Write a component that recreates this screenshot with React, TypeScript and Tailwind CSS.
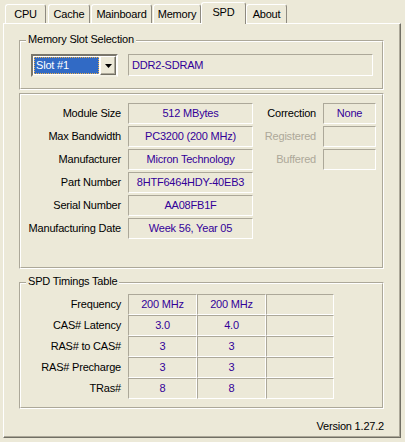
import React from "react";

const F = "font-['Liberation_Sans',Arial,sans-serif] text-[11px] tracking-[-0.2px] leading-[13px]";

function Group({ title, className, children }: { title?: string; className?: string; children?: React.ReactNode }) {
  return (
    <div className={`relative border border-t-[#ACA899] border-l-[#ACA899] border-r-white border-b-white ${className ?? ""}`}>
      <div className="h-full border border-t-white border-l-white border-r-[#ACA899] border-b-[#ACA899]">{children}</div>
      {title && (
        <div className="absolute left-[6px] top-[-8px] px-[2px] bg-[#ECE9D8] text-black">{title}</div>
      )}
    </div>
  );
}

function Box({ children, className }: { children?: React.ReactNode; className?: string }) {
  return (
    <div
      className={`h-[21px] border border-t-[#ACA899] border-l-[#ACA899] border-r-white border-b-white flex items-center justify-center text-[#330099] ${className ?? ""}`}
    >
      {children}
    </div>
  );
}

function Tab({ label, w, ml, selected }: { label: string; w: string; ml: string; selected?: boolean }) {
  return (
    <div
      className={`${w} ${ml} flex items-center justify-center rounded-t-[3px] border-t border-l border-r border-t-white border-l-white border-r-[#8E8A80] bg-[#ECE9D8] ${
        selected ? "h-[22px] -mb-px relative z-10 pb-[2px]" : "h-[19px]"
      }`}
    >
      {label}
    </div>
  );
}

const modRows: [string, string, string?, string?, boolean?][] = [
  ["Module Size", "512 MBytes", "Correction", "None", false],
  ["Max Bandwidth", "PC3200 (200 MHz)", "Registered", "", true],
  ["Manufacturer", "Micron Technology", "Buffered", "", true],
  ["Part Number", "8HTF6464HDY-40EB3"],
  ["Serial Number", "AA08FB1F"],
  ["Manufacturing Date", "Week 56, Year 05"],
];

const timings: [string, string, string][] = [
  ["Frequency", "200 MHz", "200 MHz"],
  ["CAS# Latency", "3.0", "4.0"],
  ["RAS# to CAS#", "3", "3"],
  ["RAS# Precharge", "3", "3"],
  ["TRas#", "8", "8"],
];

const cell =
  "h-[21px] border border-t-[#ACA899] border-l-[#ACA899] border-r-white border-b-white flex items-center justify-center text-[#330099]";

export default function App() {
  return (
    <div className={`w-[405px] h-[442px] bg-[#ECE9D8] text-black pt-[2px] pl-[3px] flex flex-col ${F}`}>
      {/* tabs */}
      <div className="h-[21px] flex items-end pl-[2px]">
        <Tab label="CPU" w="w-[41px]" ml="ml-0" />
        <Tab label="Cache" w="w-[42px]" ml="ml-[2px]" />
        <Tab label="Mainboard" w="w-[61px]" ml="ml-[1px]" />
        <Tab label="Memory" w="w-[48px]" ml="ml-[1px]" />
        <Tab label="SPD" w="w-[45px]" ml="ml-0" selected />
        <Tab label="About" w="w-[41px]" ml="ml-0" />
      </div>

      {/* page */}
      <div className="w-[398px] h-[415px] border border-t-white border-l-white border-r-[#716F64] border-b-[#716F64] shadow-[inset_-1px_-1px_0_#ACA899] flex flex-col pl-[15px]">
        {/* Memory Slot Selection */}
        <Group title="Memory Slot Selection" className="mt-[16px] w-[365px] h-[50px]">
          <div className="flex items-start pt-[12px] pl-[10px]">
            <div className="w-[87px] h-[23px] border-2 border-t-[#7A776C] border-l-[#7A776C] border-r-white border-b-[#F1EFE2] bg-white flex p-[1px]">
              <div className="flex-1 bg-[#316AC5] border border-dotted border-[#E8B050] text-white flex items-center pl-[1px]">
                Slot #1
              </div>
              <div className="w-[16px] ml-[1px] -my-[1px] -mr-[1px] bg-[#ECE9D8] border border-t-white border-l-white border-r-[#716F64] border-b-[#716F64] shadow-[inset_-1px_-1px_0_#ACA899] flex items-center justify-center">
                <svg width="7" height="4" viewBox="0 0 7 4">
                  <path d="M0 0H7L3.5 4Z" fill="#000" />
                </svg>
              </div>
            </div>
            <div className="ml-[10px] w-[245px] h-[22px] border border-t-[#ACA899] border-l-[#ACA899] border-r-white border-b-white flex items-center pl-[3px] text-[#330099]">
              DDR2-SDRAM
            </div>
          </div>
        </Group>

        {/* Module info */}
        <Group className="mt-[3px] w-[365px] h-[176px]">
          <div className="flex flex-col gap-[2px] pt-[8px]">
            {modRows.map(([label, value, rl, rv, dim]) => (
              <div key={label} className="flex items-center h-[21px]">
                <div className="w-[100px] text-right">{label}</div>
                <Box className="ml-[7px] w-[125px]">{value}</Box>
                {rl && (
                  <>
                    <div className={`w-[63px] text-right ${dim ? "text-[#ACA899]" : "text-black"}`}>{rl}</div>
                    <Box className="ml-[7px] w-[53px]">{rv}</Box>
                  </>
                )}
              </div>
            ))}
          </div>
        </Group>

        {/* SPD Timings */}
        <Group title="SPD Timings Table" className="mt-[13px] w-[365px] h-[127px]">
          <div className="flex flex-col pt-[10px]">
            {timings.map(([label, a, b]) => (
              <div key={label} className="flex items-center h-[21px]">
                <div className="w-[100px] text-right">{label}</div>
                <div className="ml-[7px] flex">
                  <div className={`${cell} w-[69px]`}>{a}</div>
                  <div className={`${cell} w-[69px]`}>{b}</div>
                  <div className={`${cell} w-[68px]`}></div>
                </div>
              </div>
            ))}
          </div>
        </Group>

        <div className="mt-[11px] flex justify-end pr-[16px]">Version 1.27.2</div>
      </div>
    </div>
  );
}
